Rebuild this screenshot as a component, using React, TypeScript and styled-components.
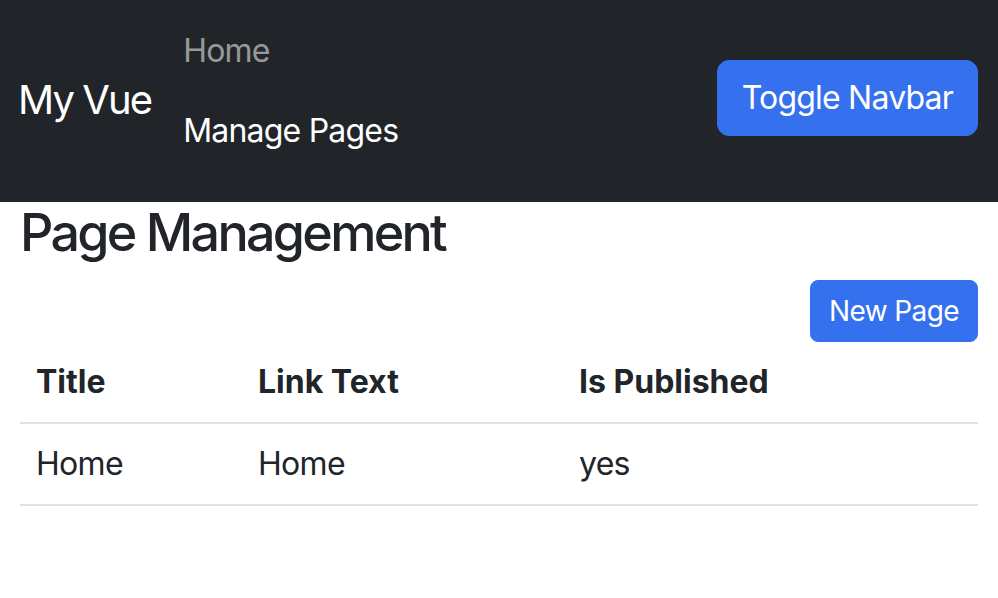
import React from "react";
import styled, { createGlobalStyle } from "styled-components";

const Global = createGlobalStyle`
  html, body { margin: 0; padding: 0; background: #fff; }
  body {
    font-family: Inter, "Noto Sans", "Liberation Sans", sans-serif;
    color: #212529;
    -webkit-font-smoothing: antialiased;
  }
  * { box-sizing: border-box; }
`;

const Navbar = styled.nav`
  height: 202px;
  background: #212529;
  display: flex;
  align-items: center;
  padding: 0 20px 0 18px;
`;

const Brand = styled.a`
  font-size: 40px;
  line-height: 60px;
  letter-spacing: -1.9px;
  color: #fff;
  text-decoration: none;
  margin-right: 32px;
  padding-bottom: 2px;
`;

const NavList = styled.ul`
  list-style: none;
  margin: 0;
  padding: 0 0 20px 0;
  display: flex;
  flex-direction: column;
  flex: 1;
`;

const NavLink = styled.a<{ $active?: boolean }>`
  display: block;
  padding: 16px 0;
  font-size: 32px;
  line-height: 48px;
  letter-spacing: -0.8px;
  color: ${(p) => (p.$active ? "#fff" : "rgba(255,255,255,0.55)")};
  text-decoration: none;
`;

const Button = styled.button<{ $small?: boolean }>`
  font-family: inherit;
  background: #3571ef;
  color: #fff;
  border: 1px solid #3571ef;
  border-radius: ${(p) => (p.$small ? "8px" : "12px")};
  font-size: ${(p) => (p.$small ? "28px" : "32px")};
  line-height: ${(p) => (p.$small ? "42px" : "48px")};
  letter-spacing: ${(p) => (p.$small ? "-0.6px" : "-0.8px")};
  padding: ${(p) => (p.$small ? "9px 18px" : "13px 24px")};
  cursor: pointer;
`;

const NavButton = styled(Button)`
  margin-bottom: 6px;
`;

const Main = styled.main`
  padding: 0 20px;
`;

const Heading = styled.h2`
  margin: 0 0 16px;
  font-size: 52px;
  line-height: 62px;
  font-weight: 500;
  letter-spacing: -2.7px;
`;

const Actions = styled.div`
  display: flex;
  justify-content: flex-end;
`;

const Table = styled.table`
  width: 100%;
  border-collapse: collapse;
  font-size: 32px;
  line-height: 48px;
`;

const Th = styled.th<{ $w?: number }>`
  text-align: left;
  font-weight: 700;
  padding: 16px;
  border-bottom: 2px solid #dee2e6;
  width: ${(p) => (p.$w ? `${p.$w}px` : "auto")};
`;

const Td = styled.td`
  padding: 16px;
  letter-spacing: -0.7px;
  border-bottom: 2px solid #dee2e6;
`;

const pages = [{ title: "Home", link: "Home", published: "yes" }];

export default function App() {
  return (
    <>
      <Global />
      <Navbar>
        <Brand href="#">My Vue</Brand>
        <NavList>
          <li>
            <NavLink href="#">Home</NavLink>
          </li>
          <li>
            <NavLink href="#" $active>
              Manage Pages
            </NavLink>
          </li>
        </NavList>
        <NavButton>Toggle Navbar</NavButton>
      </Navbar>
      <Main>
        <Heading>Page Management</Heading>
        <Actions>
          <Button $small>New Page</Button>
        </Actions>
        <Table>
          <thead>
            <tr>
              <Th $w={222}>Title</Th>
              <Th $w={321}>Link Text</Th>
              <Th>Is Published</Th>
            </tr>
          </thead>
          <tbody>
            {pages.map((p) => (
              <tr key={p.title}>
                <Td>{p.title}</Td>
                <Td>{p.link}</Td>
                <Td>{p.published}</Td>
              </tr>
            ))}
          </tbody>
        </Table>
      </Main>
    </>
  );
}
